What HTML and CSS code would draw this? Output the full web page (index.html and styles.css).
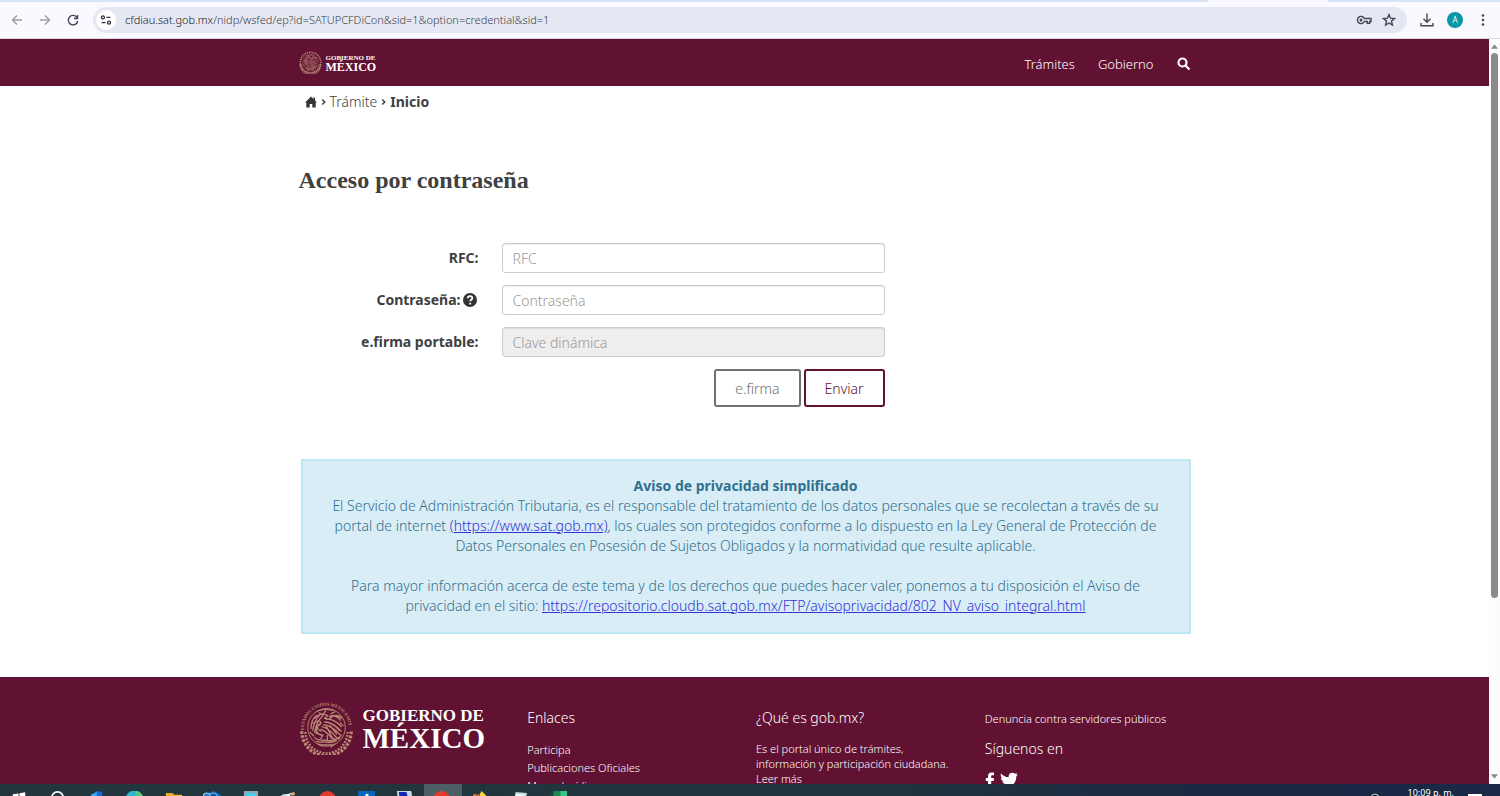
FILE: index.html
```
<!DOCTYPE html>
<html lang="es">
<head>
<meta charset="utf-8">
<meta name="viewport" content="width=device-width, initial-scale=1">
<title>Acceso por contraseña</title>
<link rel="stylesheet" href="styles.css">
</head>
<body>
<svg class="defs" aria-hidden="true">
  <defs>
    <path id="seal-ring" d="M30 3.500a26.500 26.500 0 1 1-.01 0"/>
    <path id="seal-legend" d="M5.500 33A24.600 24.600 0 1 1 54.500 33"/>
    <symbol id="seal-eagle" viewBox="0 0 60 60">
      <g fill="none" stroke="currentColor" stroke-width="1.400" stroke-linecap="round">
        <path d="M13 31c0-6 2-11 6-14M15 33c1-7 3-12 7-16M17 35c1-7 4-13 9-18M17 20c4-5 10-6 14-3l-3 3 5 1c4-5 10-6 13-1M33 18c5-2 9 0 12 4M30 21c5-1 12 3 16 8M28 24c7 0 13 5 18 10M27 27c6 0 12 5 18 11M25 29c6 1 11 6 16 12M24 32c5 2 9 6 12 10M22 26c-3 3-2 7 2 8M20 29c-3 4 0 9 5 9M30 29l6 12M34 28l7 9M38 27l6 6M15 25c3 1 4-3 7-2s2 4-1 5M18 36l8 3M26 16l3-4M35 15l4-2M41 18l4 0"/>
        <path d="M17 41c4 4 9 2 13 3s9 0 13-3M19 45c4 2 7 0 11 1s7 0 11-2M24 49h12M26 38l-2 4M31 39v4M37 41l2 3M22 14l3 2M45 25l3 3M12 35l4 4M46 38l-3 5M20 12l8-2 9 1M21 48l4 2M39 48l-4 3"/>
      </g>
    </symbol>
    <symbol id="seal-wreath" viewBox="0 0 60 60">
      <g fill="none" stroke="currentColor">
        <path d="M3 34A27 27 0 0 0 57 34" stroke-width="3.500" stroke-dasharray="3 1.500"/>
        <path d="M7 35A23 23 0 0 0 53 35" stroke-width="2.500" stroke-dasharray="2 1.500"/>
        <circle cx="30" cy="30" r="20.500" stroke-width="1"/>
      </g>
    </symbol>
  </defs>
</svg>

<header class="browser">
  <div class="tabs"><span class="tab-active"></span></div>
  <div class="toolbar">
    <button class="tool tool-dim" aria-label="Atrás"><svg viewBox="0 0 16 16"><path d="M13 8H4M8 3.500 3.500 8 8 12.500"/></svg></button>
    <button class="tool tool-dim" aria-label="Adelante"><svg viewBox="0 0 16 16"><path d="M3 8h9M8 3.500 12.500 8 8 12.500"/></svg></button>
    <button class="tool" aria-label="Recargar"><svg viewBox="0 0 16 16"><path d="M12 5.500A4.700 4.700 0 1 0 12.700 9M12.500 3v3.500H9"/></svg></button>
    <div class="address">
      <button class="site-info" aria-label="Información del sitio"><svg viewBox="0 0 16 16"><circle cx="4.500" cy="5" r="1.700"/><path d="M8.500 5H13M3 11h4.500"/><circle cx="11.500" cy="11" r="1.700"/></svg></button>
      <span class="url"><b>cfdiau.sat.gob.mx</b>/nidp/wsfed/ep?id=SATUPCFDiCon&amp;sid=1&amp;option=credential&amp;sid=1</span>
      <button class="tool" aria-label="Contraseñas"><svg viewBox="0 0 16 16"><path d="M8.300 6.500H15v3h-1.300v1.700h-2.400V9.500h-3A3.600 3.600 0 1 1 8.300 6.500z"/><circle cx="5" cy="8" r=".8"/></svg></button>
      <button class="tool" aria-label="Marcar"><svg viewBox="0 0 16 16"><path d="m8 2.500 1.500 3.700 4 .3-3 2.600.9 3.900L8 11l-3.400 2 .9-3.900-3-2.600 4-.3z"/></svg></button>
    </div>
    <button class="tool download" aria-label="Descargas"><svg viewBox="0 0 16 16"><path d="M8 1.500V10M4.500 6.800 8 10.200l3.500-3.400M2 11v2.700h12V11"/></svg></button>
    <button class="avatar" aria-label="Perfil">A</button>
    <button class="tool" aria-label="Menú"><svg class="solid" viewBox="0 0 16 16"><circle cx="8" cy="3.500" r="1.300"/><circle cx="8" cy="8" r="1.300"/><circle cx="8" cy="12.500" r="1.300"/></svg></button>
  </div>
</header>

<div class="viewport">
  <div class="page">
    <nav class="topbar">
      <div class="container topbar-row">
        <a class="brand" href="#">
          <svg class="seal" viewBox="0 0 60 60"><use href="#seal-ring" class="ring"/><use href="#seal-wreath"/><use href="#seal-eagle"/></svg>
          <span class="brand-name"><span>GOBIERNO DE</span><strong>MÉXICO</strong></span>
        </a>
        <div class="nav-links">
          <a href="#">Trámites</a>
          <a href="#">Gobierno</a>
          <a href="#" aria-label="Buscar"><svg class="search" viewBox="0 0 14 14"><circle cx="5.500" cy="5.500" r="4"/><path d="m8.500 8.500 4 4"/></svg></a>
        </div>
      </div>
    </nav>

    <main class="container">
      <div class="crumbs">
        <a href="#" aria-label="Inicio del portal"><svg class="home" viewBox="0 0 12 12"><path d="M6 .5 8.500 3V1.500H10v3l2 2h-1.300V11.500H7.300V8H4.700v3.500H1.300V6.500H0z"/></svg></a>
        <svg class="chev" viewBox="0 0 6 8"><path d="m1.500 1 3 3-3 3"/></svg>
        <a href="#">Trámite</a>
        <svg class="chev" viewBox="0 0 6 8"><path d="m1.500 1 3 3-3 3"/></svg>
        <strong>Inicio</strong>
      </div>

      <h1>Acceso por contraseña</h1>

      <form class="login">
        <label for="rfc">RFC:</label>
        <input id="rfc" type="text" placeholder="RFC">
        <label for="clave">Contraseña:<svg class="help" viewBox="0 0 14 14"><circle cx="7" cy="7" r="7"/><path d="M4.700 5.300C4.800 2.400 9.300 2.500 9.300 5.200 9.300 6.700 7.200 6.700 7.200 8.300M7.200 9.700v1.700"/></svg></label>
        <input id="clave" type="password" placeholder="Contraseña">
        <label for="dinamica">e.firma portable:</label>
        <input id="dinamica" type="text" placeholder="Clave dinámica" disabled>
        <div class="actions">
          <button type="button" class="btn">e.firma</button>
          <button type="button" class="btn btn-primary">Enviar</button>
        </div>
      </form>

      <section class="notice">
        <strong>Aviso de privacidad simplificado</strong>
        <p>El Servicio de Administración Tributaria, es el responsable del tratamiento de los datos personales que se recolectan a través de su portal de internet <a href="#">(https://www.sat.gob.mx)</a>, los cuales son protegidos conforme a lo dispuesto en la Ley General de Protección de Datos Personales en Posesión de Sujetos Obligados y la normatividad que resulte aplicable.</p>
        <p>Para mayor información acerca de este tema y de los derechos que puedes hacer valer, ponemos a tu disposición el Aviso de privacidad en el sitio: <a href="#">https://repositorio.cloudb.sat.gob.mx/FTP/avisoprivacidad/802_NV_aviso_integral.html</a></p>
      </section>
    </main>

    <footer class="footer">
      <div class="container footer-grid">
        <div class="brand brand-large">
          <svg class="seal" viewBox="0 0 60 60"><use href="#seal-wreath"/><use href="#seal-eagle"/><text class="legend"><textPath href="#seal-legend">ESTADOS UNIDOS MEXICANOS</textPath></text></svg>
          <span class="brand-name"><span>GOBIERNO DE</span><strong>MÉXICO</strong></span>
        </div>
        <div class="col">
          <h2>Enlaces</h2>
          <ul>
            <li><a href="#">Participa</a></li>
            <li><a href="#">Publicaciones Oficiales</a></li>
            <li><a href="#">Marco Jurídico</a></li>
          </ul>
        </div>
        <div class="col">
          <h2>¿Qué es gob.mx?</h2>
          <p>Es el portal único de trámites, información y participación ciudadana. <a href="#">Leer más</a></p>
        </div>
        <div class="col">
          <a class="report" href="#">Denuncia contra servidores públicos</a>
          <h2>Síguenos en</h2>
          <div class="social">
            <a href="#" aria-label="Facebook"><svg class="fb" viewBox="0 0 10 16"><path d="M3 16V9H.8V6H3V4C3 1.500 4.500.5 6.500.5H9V3.300H7.300C6.500 3.300 6.200 3.700 6.200 4.400V6H9L8.600 9H6.200v7z"/></svg></a>
            <a href="#" aria-label="Twitter"><svg class="tw" viewBox="0 0 18 16"><path d="M1 1.500c2 2.300 4.600 3.600 7.700 3.800C8.200 2.600 10 .7 12.300.7c1.100 0 2 .4 2.700 1.100L17.300 1 16 3l2-.5-1.700 1.900C16.500 10.500 12 15 6.500 15 4.300 15 2 14.400.5 13.400c2 .1 3.800-.4 5.200-1.500-1.700-.2-2.900-1.200-3.300-2.500h1.500C2.100 8.900.9 7.500.9 5.700l1.600.4C.9 4.900.2 3.100 1 1.500z"/></svg></a>
          </div>
        </div>
      </div>
    </footer>
  </div>
  <div class="scrollbar" aria-hidden="true">
    <svg viewBox="0 0 8 5"><path d="M4 0 8 5H0z"/></svg>
    <div class="track"><div class="thumb"></div></div>
    <svg viewBox="0 0 8 5"><path d="M0 0h8L4 5z"/></svg>
  </div>
</div>

<div class="taskbar">
  <div class="apps">
    <span><svg viewBox="0 0 20 20"><path fill="#fff" d="m3 3.500 6-1V9H3zM10 2.300l6-1V9h-6z"/></svg></span>
    <span><svg viewBox="0 0 20 20"><circle cx="10" cy="7" r="6" fill="none" stroke="#fff" stroke-width="1.800"/></svg></span>
    <span><svg viewBox="0 0 20 20"><path fill="#1769d2" d="m5 4 6-4 5 1v9H5z"/><path fill="#38a5ff" d="m4 4 6-3 1 9H4z"/></svg></span>
    <span><svg viewBox="0 0 20 20"><circle cx="10" cy="9" r="9.500" fill="#2ab6d5"/><path fill="#58cb72" d="M11 0c5 0 8 4 8 8h-6z"/></svg></span>
    <span><svg viewBox="0 0 20 20"><path fill="#eda923" d="M2 2h7l2 2h8v8H2z"/><path fill="#ffdb78" d="M2 5h17v7H2z"/></svg></span>
    <span><svg viewBox="0 0 20 20"><path fill="#1266bd" d="m7 2 5-2 8 4v6H7z"/><circle cx="5" cy="6" r="4" fill="#327bba" stroke="#a6dfff"/><circle cx="12" cy="6" r="4" fill="#1558a6" stroke="#6cc2f5"/></svg></span>
    <span><svg viewBox="0 0 20 20"><path fill="#9aa5a9" d="M3 0h15v10H3z"/><path fill="#43d2ee" d="M5 2h11v8H5z"/></svg></span>
    <span><svg viewBox="0 0 20 20"><path fill="#b9d5dc" d="M1 7c1-5 10-5 12-1v4H1z"/><path fill="#e5a865" d="m12 2 4-1 1 3-4 1z"/><path fill="#fff" d="m7 4 6-2-3 5z"/></svg></span>
    <span><svg viewBox="0 0 20 20"><circle cx="10" cy="9" r="9" fill="#e63a2e"/><path fill="#ffd052" d="M10 6h9v6h-9z"/><circle cx="10" cy="10" r="4.500" fill="#fff"/></svg></span>
    <span><svg viewBox="0 0 20 20"><path fill="#0865bd" d="M1 0h18v10H1z"/><path fill="#fff" d="M9 3h3v7H9z"/></svg></span>
    <span><svg viewBox="0 0 20 20"><path fill="#ccd8ea" d="M2 0h15l2 10H3z"/><path fill="#1428b7" d="M4 1h8l2 7H5z"/></svg></span>
    <span class="current"><svg viewBox="0 0 20 20"><circle cx="8" cy="9" r="9" fill="#e63a2e"/><path fill="#ffd052" d="M8 6h9v6H8z"/><circle cx="8" cy="10" r="4.500" fill="#fff"/></svg></span>
    <span><svg viewBox="0 0 20 20"><path fill="#ffd831" d="m10 0 5 5v5H8V4z"/><path fill="#ee812f" d="m1 4 3-1 1 2 2-2 1 7H3z"/></svg></span>
    <span><svg viewBox="0 0 20 20"><path fill="#bcd9db" d="m5 1 12 1-2 8H3z"/><path fill="#eff" d="m5 3 9 1-1 6H4z"/></svg></span>
    <span><svg viewBox="0 0 20 20"><path fill="#36c481" d="M5 0h14v10H5z"/><path fill="#168850" d="M5 0h7v10H5zM0 5h9v5H0z"/></svg></span>
  </div>
  <div class="tray">
    <svg class="tray-icon" viewBox="0 0 10 10"><circle cx="5" cy="5" r="4"/></svg>
    <time>10:09 p. m.</time>
    <svg class="tray-note" viewBox="0 0 14 12"><path d="M0 0h14v10H0z"/></svg>
  </div>
</div>
</body>
</html>
```
FILE: styles.css
```
* { box-sizing: border-box; }

body {
  margin: 0;
  height: 100vh;
  display: flex;
  flex-direction: column;
  overflow: hidden;
  background: #fff;
  color: #404041;
  font: 300 14px/20px "Noto Sans", "Open Sans", sans-serif;
}

a { color: inherit; text-decoration: none; }
button { font-family: inherit; padding: 0; border: 0; background: none; cursor: pointer; }
svg { display: block; flex: none; }
h1, h2, p, ul { margin: 0; padding: 0; }
strong { font-weight: 700; }
.defs { position: absolute; width: 0; height: 0; }

/* Browser chrome */
.browser { flex: none; background: #f9f9ff; border-bottom: 1px solid #d9dbe3; }
.tabs { height: 2px; background: #d8e3f8; display: flex; justify-content: flex-end; padding-right: 172px; }
.tab-active { width: 120px; background: #f9f9ff; }
.toolbar { height: 36px; display: flex; align-items: center; padding: 0 9px; gap: 12px; }
.tool { width: 16px; height: 16px; color: #42474f; }
.tool svg { width: 16px; height: 16px; fill: none; stroke: currentColor; stroke-width: 1.4; }
.tool .solid { fill: currentColor; stroke: none; }
.tool-dim { color: #9b9ea5; }
.address {
  flex: 1;
  height: 26px;
  display: flex;
  align-items: center;
  gap: 9px;
  padding: 0 10px 0 3px;
  border-radius: 13px;
  background: #e5e8f3;
}
.site-info { width: 20px; height: 20px; border-radius: 50%; background: #fff; color: #33363c; }
.site-info svg { width: 14px; height: 14px; margin: auto; fill: none; stroke: currentColor; stroke-width: 1.5; }
.url { flex: 1; color: #3c3f46; font-size: 11px; line-height: 16px; }
.url b { color: #16181c; font-weight: inherit; }
.avatar { width: 16px; height: 16px; border-radius: 50%; background: #0797a7; color: #fff; font-size: 8px; line-height: 16px; }

/* Scrolling area */
.viewport { flex: 1; min-height: 0; display: flex; }
.page { flex: 1; min-width: 0; overflow: hidden; }
.scrollbar { width: 11px; background: #fcfcfc; display: flex; flex-direction: column; align-items: center; padding: 5px 0; gap: 4px; }
.scrollbar svg { width: 7px; height: 5px; fill: #8b8b8b; }
.track { flex: 1; width: 7px; }
.thumb { height: 76%; border-radius: 4px; background: #8b8b8b; }
.container { max-width: 892px; margin: 0 auto; }

/* Top navigation */
.topbar { background: #611232; color: #fff; }
.topbar-row { height: 47px; display: flex; align-items: center; justify-content: space-between; }
.brand { display: flex; align-items: center; gap: 4px; color: #fff; }
.seal { width: 23px; height: 23px; color: #b98b76; }
.seal .ring { fill: none; stroke: currentColor; stroke-width: 4; stroke-dasharray: 3 2; }
.brand-name { display: flex; flex-direction: column; font: 700 7px/8px "Liberation Serif", serif; }
.brand-name strong { font-size: 12px; line-height: 10px; }
.nav-links { display: flex; align-items: center; gap: 23px; padding-top: 2px; font-size: 13px; }
.search { width: 14px; height: 14px; fill: none; stroke: #fff; stroke-width: 2.2; }

/* Breadcrumb and heading */
.crumbs { display: flex; align-items: center; gap: 4px; padding: 6px 6px 4px; }
.home { width: 12px; height: 12px; fill: #33373a; }
.chev { width: 5px; height: 8px; fill: none; stroke: #404041; stroke-width: 1.8; }
h1 { margin-top: 49px; font: 700 24px/30px "Liberation Serif", serif; }

/* Login form */
.login {
  display: grid;
  grid-template-columns: 180px minmax(0, 383px);
  gap: 12px 23px;
  align-items: center;
  margin-top: 48px;
}
.login label { display: flex; justify-content: flex-end; align-items: center; gap: 2px; font-weight: 700; }
.help { width: 14px; height: 14px; margin-right: 2px; fill: #333; }
.help path { fill: none; stroke: #fff; stroke-width: 1.8; }
.login input {
  width: 100%;
  height: 30px;
  padding: 0 10px;
  border: 1px solid #ccc;
  border-radius: 3px;
  background: #fff;
  box-shadow: inset 0 1px 1px rgba(0, 0, 0, .08);
  color: #555;
  font: inherit;
}
.login input::placeholder { color: #999; opacity: 1; }
.login input:disabled { background: #eee; }
.actions { grid-column: 2; display: flex; justify-content: flex-end; gap: 3px; }
.btn { height: 38px; padding: 0 19px; border: 2px solid #6f7271; border-radius: 3px; color: #6f7271; background: #fff; font-size: 14px; font-weight: 300; }
.btn-primary { border-color: #611232; color: #611232; }

/* Privacy notice */
.notice {
  margin: 52px 0 43px 2px;
  padding: 15px 26px 16px;
  border: 2px solid #bce8f1;
  background: #d9edf7;
  color: #31708f;
  text-align: center;
}
.notice strong { display: block; }
.notice p + p { margin-top: 20px; }
.notice a { color: #3333d6; text-decoration: underline; }

/* Footer */
.footer { min-height: 220px; padding-top: 23px; background: #611232; color: #fff; }
.footer-grid { display: grid; grid-template-columns: repeat(4, 1fr); gap: 23px; }
.footer .brand { align-self: start; }
.brand-large { gap: 9px; }
.brand-large .seal { width: 55px; height: 55px; }
.legend { fill: currentColor; font: 700 5px "Liberation Serif", serif; }
.brand-large .brand-name { font-size: 17px; line-height: 20px; }
.brand-large strong { font-size: 29px; line-height: 24px; }
.col { font-size: 11px; line-height: 15px; }
.col h2 { margin-top: 8px; font-size: 14px; line-height: 20px; font-weight: 300; }
.col ul { margin-top: 13px; list-style: none; line-height: 18px; }
.col p { margin-top: 13px; }
.report { display: block; margin-top: 11px; }
.report + h2 { margin-top: 13px; }
.social { display: flex; gap: 5px; margin-top: 13px; }
.social svg { fill: #fff; }
.fb { width: 10px; height: 16px; }
.tw { width: 18px; height: 16px; }

/* Taskbar */
.taskbar { flex: none; height: 12px; overflow: hidden; display: flex; justify-content: space-between; background: linear-gradient(90deg, #22363d 0%, #21353f 55%, #182742 85%, #1a2947 100%); }
.apps { display: flex; width: 578px; }
.apps span { flex: 1; height: 40px; padding-top: 7px; }
.apps svg { width: 19px; height: 19px; margin: 0 auto; }
.apps .current { background: #4d5f65; }
.tray { display: flex; gap: 28px; padding-right: 18px; color: #fff; }
.tray time { font-size: 9px; line-height: 17px; font-weight: 400; }
.tray-icon { width: 10px; height: 10px; margin-top: 9px; fill: none; stroke: #ccc; }
.tray-note { width: 14px; height: 12px; margin: 10px 0 0 -14px; fill: #fff; }
```
